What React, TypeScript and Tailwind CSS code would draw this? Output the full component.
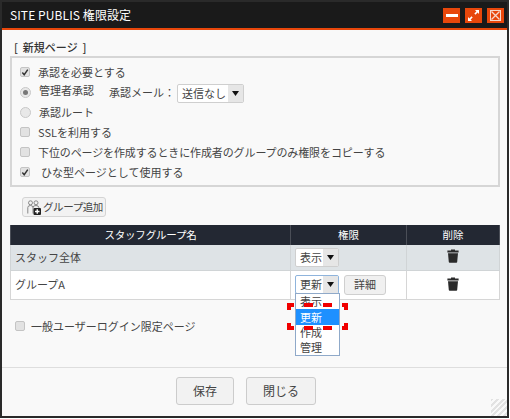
import type { ReactNode } from "react";

const font = "font-['Noto_Sans_CJK_JP','Noto_Sans',sans-serif]";

function Check({ checked }: { checked?: boolean }) {
  return (
    <span className="flex h-[10px] w-[10px] shrink-0 items-center justify-center rounded-[2px] border border-[#c4c4c4] bg-[#e2e2e2]">
      {checked && (
        <svg width="9" height="9" viewBox="0 0 9 9" className="block">
          <path d="M1.5 4.5 L3.6 7 L7.6 1.2" fill="none" stroke="#333" strokeWidth="1.6" />
        </svg>
      )}
    </span>
  );
}

function Radio({ checked }: { checked?: boolean }) {
  return (
    <span className="flex h-[11px] w-[11px] shrink-0 items-center justify-center rounded-full border border-[#c8c8c8] bg-[#e8e8e8]">
      {checked && <span className="h-[5px] w-[5px] rounded-full bg-[#777]" />}
    </span>
  );
}

function Row({ children }: { children: ReactNode }) {
  return <div className="flex h-[20px] items-center">{children}</div>;
}

function Select({ value, focus, width }: { value: string; focus?: boolean; width: string }) {
  return (
    <div
      className={`flex h-[19px] items-stretch overflow-hidden rounded-[2px] border bg-white ${width} ${
        focus ? "border-[#8fb4dc]" : "border-[#cfcfcf]"
      }`}
    >
      <span className="flex-1 pl-[4px] text-[11px] leading-[17px] text-[#444]">{value}</span>
      <span className="flex w-[15px] items-center justify-center bg-[#e6e6e6] text-black">
        <svg width="7" height="5" viewBox="0 0 7 5">
          <path d="M0 0 H7 L3.5 5 Z" fill="#111" />
        </svg>
      </span>
    </div>
  );
}

function Trash() {
  return (
    <svg width="12" height="14" viewBox="0 0 12 14" className="block">
      <path d="M4 0.5 H8 V1.6 H11.6 V3.4 H0.4 V1.6 H4 Z" fill="#2a2a2a" />
      <path d="M1 4.2 H11 L10.2 13 Q10.1 13.7 9.4 13.7 H2.6 Q1.9 13.7 1.8 13 Z" fill="#2a2a2a" />
    </svg>
  );
}

function GroupIcon() {
  return (
    <svg width="15" height="15" viewBox="0 0 15 15" className="block shrink-0">
      <circle cx="3.5" cy="2.8" r="2" fill="none" stroke="#888" strokeWidth="1" />
      <circle cx="9" cy="2.8" r="2" fill="none" stroke="#888" strokeWidth="1" />
      <path d="M0.8 13.5 V7.5 Q0.8 5.5 3.5 5.5 Q6 5.5 6 7.5 V13.5" fill="none" stroke="#888" strokeWidth="1" />
      <path d="M6 7.5 Q6 5.5 9 5.5 Q11.8 5.5 11.8 7.5 V8.5" fill="none" stroke="#888" strokeWidth="1" />
      <rect x="6.5" y="8" width="7.5" height="7" rx="1" fill="#222" />
      <path d="M10.25 9.3 V13.7 M8 11.5 H12.5" stroke="#fff" strokeWidth="1.4" />
    </svg>
  );
}

function WinButton({ children }: { children: ReactNode }) {
  return <div className="flex h-[15px] w-[17px] items-center justify-center bg-[#e8470b]">{children}</div>;
}

function RedMarker() {
  return (
    <svg width="61" height="27" viewBox="0 0 61 27" className="pointer-events-none absolute left-[287px] top-[303px]">
      <g stroke="#f00000" strokeWidth="4" fill="none">
        <path d="M2 7 V2 H7" />
        <path d="M17 2 H26 M36 2 H45" />
        <path d="M55 2 H59 V7" />
        <path d="M2 20 V25 H7" />
        <path d="M17 25 H26 M36 25 H45" />
        <path d="M55 25 H59 V20" />
      </g>
    </svg>
  );
}

export default function App() {
  return (
    <div className={`relative h-[419px] w-[510px] bg-white ${font}`}>
      <div className="flex h-[418px] w-[509px] flex-col overflow-hidden border-2 border-[#2a2a2a] bg-[#f9f9f9]">
        {/* title bar */}
        <div className="flex h-[28px] shrink-0 items-center justify-between border-b-[2px] border-[#e8470b] bg-[#1a1a1a] pl-[8px] pr-[3px]">
          <span className="text-[12px] tracking-[0.1px] text-white">SITE PUBLIS 権限設定</span>
          <div className="flex gap-[5px]">
            <WinButton>
              <span className="h-[3px] w-[12px] bg-white" />
            </WinButton>
            <WinButton>
              <svg width="13" height="13" viewBox="0 0 13 13">
                <path d="M8 1 H12 V5 L10.6 3.6 L8.5 5.7 L7.3 4.5 L9.4 2.4 Z" fill="#fff" />
                <path d="M5 12 H1 V8 L2.4 9.4 L4.5 7.3 L5.7 8.5 L3.6 10.6 Z" fill="#fff" />
              </svg>
            </WinButton>
            <WinButton>
              <svg width="11" height="11" viewBox="0 0 11 11">
                <rect x="0.5" y="0.5" width="10" height="10" fill="none" stroke="#f6d9cc" />
                <path d="M1.5 1.5 L9.5 9.5 M9.5 1.5 L1.5 9.5" stroke="#f6d9cc" strokeWidth="1.3" />
              </svg>
            </WinButton>
          </div>
        </div>

        {/* body */}
        <div className="flex flex-1 flex-col px-[8px] pt-[8px]">
          <div className="h-[18px] pl-[4px] text-[11px] font-medium leading-[18px] text-[#333]">
            [&nbsp;&nbsp;新規ページ&nbsp;&nbsp;]
          </div>

          <div className="h-[131px] w-[490px] border-2 border-[#d6d6d6] pl-[8px] pt-[4px] text-[11px] text-[#444]">
            <Row>
              <Check checked />
              <span className="ml-[8px]">承認を必要とする</span>
            </Row>
            <Row>
              <Radio checked />
              <span className="mb-[3px] ml-[8px]">管理者承認</span>
              <span className="ml-[15px]">承認メール：</span>
              <div className="ml-[2px] mt-[2px]">
                <Select value="送信なし" width="w-[67px]" />
              </div>
            </Row>
            <Row>
              <Radio />
              <span className="ml-[8px]">承認ルート</span>
            </Row>
            <Row>
              <Check />
              <span className="ml-[8px]">SSLを利用する</span>
            </Row>
            <Row>
              <Check />
              <span className="ml-[8px] tracking-[-0.12px]">下位のページを作成するときに作成者のグループのみ権限をコピーする</span>
            </Row>
            <Row>
              <Check checked />
              <span className="ml-[11px]">ひな型ページとして使用する</span>
            </Row>
          </div>

          <div className="ml-[12px] mt-[10px] flex h-[20px] w-[84px] items-center rounded-[3px] border border-[#d4d4d4] bg-[#f2f2f2] pl-[4px] text-[10.5px] text-[#444]">
            <GroupIcon />
            <span className="ml-[1px] whitespace-nowrap tracking-[-0.4px]">グループ追加</span>
          </div>

          <table className="mt-[8px] w-[490px] table-fixed border-collapse text-[11px] text-[#444]">
            <thead>
              <tr className="h-[20px] bg-[#232833] text-[10.5px] text-white">
                <th className="w-[280px] border-x border-[#4a4e57] font-normal tracking-[-0.2px]">スタッフグループ名</th>
                <th className="w-[116px] border-x border-[#4a4e57] font-normal">権限</th>
                <th className="border-x border-[#4a4e57] font-normal">削除</th>
              </tr>
            </thead>
            <tbody>
              <tr className="h-[25px] border-b border-[#d0d4d6] bg-[#dee3e6]">
                <td className="border-x border-[#d0d4d6] pl-[4px]">スタッフ全体</td>
                <td className="border-x border-[#d0d4d6] pl-[4px]">
                  <Select value="表示" width="w-[44px]" />
                </td>
                <td className="border-x border-[#d0d4d6]">
                  <div className="flex justify-center pb-[3px]">
                    <Trash />
                  </div>
                </td>
              </tr>
              <tr className="h-[29px] border-b border-[#d6d6d6] bg-white">
                <td className="border-x border-[#d6d6d6] pl-[4px]">グループA</td>
                <td className="border-x border-[#d6d6d6] pl-[4px]">
                  <div className="flex items-center gap-[5px]">
                    <div className="mb-[1px]">
                      <Select value="更新" width="w-[44px]" focus />
                    </div>
                    <span className="flex h-[20px] w-[42px] items-center justify-center rounded-[3px] border border-[#cfcfcf] bg-[#f0f0f0] text-[11px]">
                      詳細
                    </span>
                  </div>
                </td>
                <td className="border-x border-[#d6d6d6]">
                  <div className="flex justify-center pb-[2px]">
                    <Trash />
                  </div>
                </td>
              </tr>
            </tbody>
          </table>

          <div className="ml-[5px] mt-[18px] flex items-center text-[11px] text-[#444]">
            <Check />
            <span className="ml-[6px]">一般ユーザーログイン限定ページ</span>
          </div>
        </div>

        {/* footer */}
        <div className="flex h-[49px] shrink-0 gap-[12px] border-t border-[#dedede] pl-[174px] pt-[9px] text-[12px] text-[#444]">
          <button className="h-[28px] w-[58px] rounded-[3px] border border-[#cccccc] bg-[#f2f2f2]">保存</button>
          <button className="h-[28px] w-[70px] rounded-[3px] border border-[#cccccc] bg-[#f2f2f2]">閉じる</button>
        </div>
      </div>

      {/* open dropdown */}
      <div className="absolute left-[295px] top-[293px] w-[45px] border border-[#8fa9c9] bg-white text-[11px] text-[#444]">
        <div className="h-[15px] pl-[4px] leading-[15px]">表示</div>
        <div className="h-[16px] bg-[#1e90ff] pl-[4px] leading-[16px] text-white">更新</div>
        <div className="h-[15px] pl-[4px] leading-[15px]">作成</div>
        <div className="h-[15px] pl-[4px] leading-[15px]">管理</div>
      </div>
      <RedMarker />

      {/* resize handle */}
      <div className="absolute left-[491px] top-[399px] h-[17px] w-[16px] bg-[repeating-linear-gradient(135deg,#e2e2e2_0px,#e2e2e2_2px,#f9f9f9_2px,#f9f9f9_4px)]" />
    </div>
  );
}
